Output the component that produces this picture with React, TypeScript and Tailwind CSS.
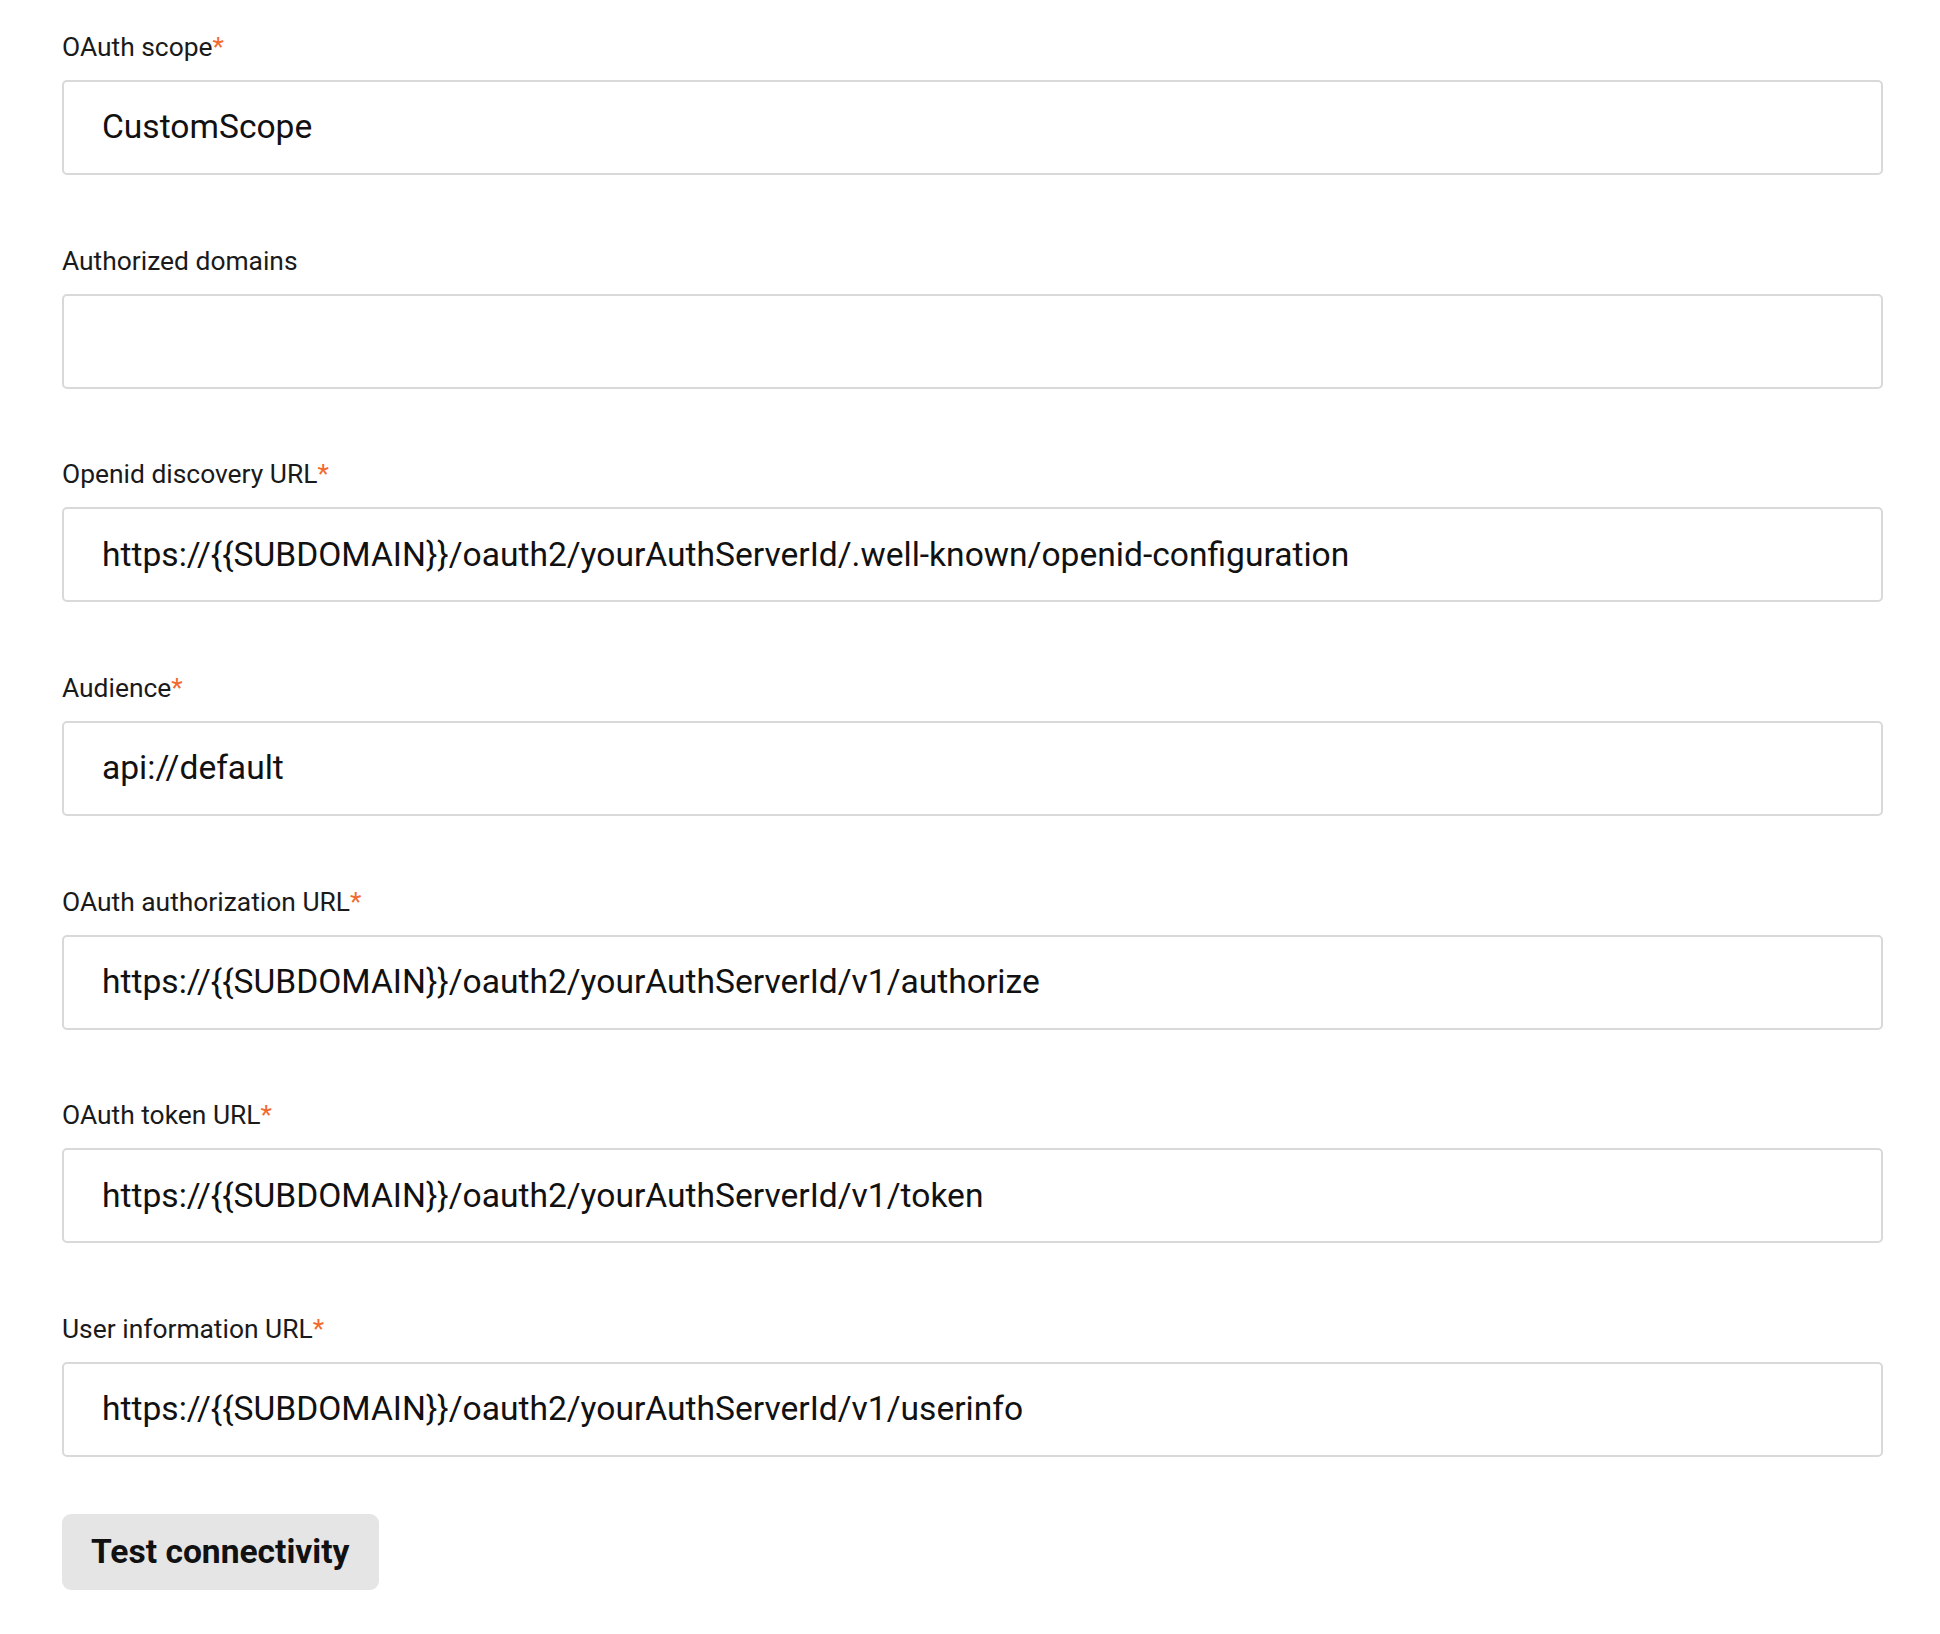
type Field = { label: string, value: string, required: boolean }

const fields: Field[] = [
  { label: 'OAuth scope', value: 'CustomScope', required: true },
  { label: 'Authorized domains', value: '', required: false },
  { label: 'Openid discovery URL', value: 'https://{{SUBDOMAIN}}/oauth2/yourAuthServerId/.well-known/openid-configuration', required: true },
  { label: 'Audience', value: 'api://default', required: true },
  { label: 'OAuth authorization URL', value: 'https://{{SUBDOMAIN}}/oauth2/yourAuthServerId/v1/authorize', required: true },
  { label: 'OAuth token URL', value: 'https://{{SUBDOMAIN}}/oauth2/yourAuthServerId/v1/token', required: true },
  { label: 'User information URL', value: 'https://{{SUBDOMAIN}}/oauth2/yourAuthServerId/v1/userinfo', required: true }
]

export default function App() {
  return (
    <div className="min-h-screen bg-white pl-[62px] pr-[57px] pt-[31px] pb-[44px] text-[#1a1a1a] font-['Roboto',sans-serif]">
      {fields.map(f => (
        <div key={f.label} className="mb-[69.7px]">
          <label className="block text-[26.4px] leading-[32px] mb-[17px]">
            {f.label}
            {f.required && <span className="text-[#f26a2e]">*</span>}
          </label>
          <div className="flex h-[95px] items-center rounded-[5px] border-2 border-[#d9d9d9] pl-[38px] text-[33.6px] text-[#111111]">
            {f.value}
          </div>
        </div>
      ))}
      <button className="-mt-[13px] h-[76px] rounded-[9px] bg-[#e5e5e5] px-[29px] text-[33.6px] font-bold text-[#111111]">
        Test connectivity
      </button>
    </div>
  )
}
